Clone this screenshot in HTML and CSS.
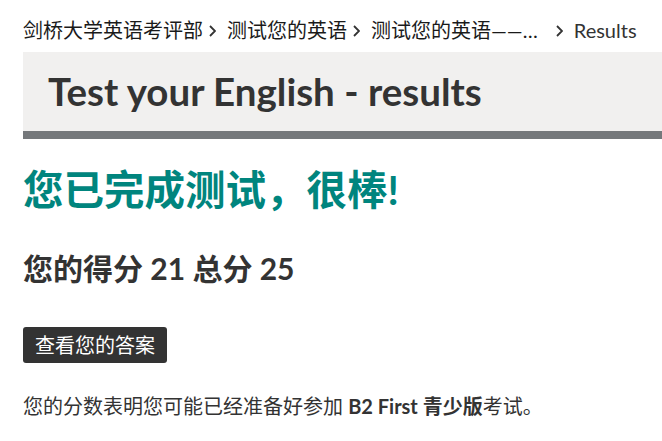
FILE: index.html
```html
<!DOCTYPE html>
<html lang="zh-CN">
<head>
<meta charset="utf-8">
<title>Test your English - results</title>
<link rel="stylesheet" href="styles.css">
</head>
<body>
<nav class="crumbs">
  <a class="crumb" href="#">剑桥大学英语考评部</a>
  <svg class="sep" viewBox="0 0 7 12" aria-hidden="true"><path d="M1 1l5 5-5 5"/></svg>
  <a class="crumb" href="#">测试您的英语</a>
  <svg class="sep" viewBox="0 0 7 12" aria-hidden="true"><path d="M1 1l5 5-5 5"/></svg>
  <a class="crumb crumb-cut" href="#">测试您的英语——…</a>
  <svg class="sep" viewBox="0 0 7 12" aria-hidden="true"><path d="M1 1l5 5-5 5"/></svg>
  <span class="crumb current">Results</span>
</nav>
<header class="banner">
  <h1 class="banner-title">Test your English - results</h1>
</header>
<main class="result">
  <h2 class="result-title">您已完成测试，很棒!</h2>
  <h3 class="result-score">您的得分 21 总分 25</h3>
  <button class="btn-answers" type="button">查看您的答案</button>
  <p class="result-note">您的分数表明您可能已经准备好参加 <strong>B2 First 青少版</strong>考试。</p>
</main>
</body>
</html>
```
FILE: styles.css
```css
html, body {
  margin: 0;
  padding: 0;
  background: #fff;
}

body {
  font-family: "Lato", "Noto Sans CJK SC", sans-serif;
  color: #333;
  padding-left: 23px;
}

.crumbs {
  display: flex;
  align-items: center;
  height: 44px;
  padding-top: 8px;
  font-size: 20px;
  line-height: 1;
  white-space: nowrap;
}

.crumb {
  color: #1a1a1a;
  text-decoration: none;
}

.sep {
  width: 7px;
  height: 12px;
  margin: 1px 11px 0 6px;
  fill: none;
  stroke: #333;
  stroke-width: 1.8;
}

.crumb-cut {
  margin-right: 12px;
}

.current {
  color: #333;
  font-size: 20px;
}

.banner {
  background: #f1f0ef;
  border-bottom: 8px solid #75787b;
  height: 79px;
  display: flex;
  align-items: center;
  padding-left: 25px;
}

.banner-title {
  margin: 0;
  font-size: 38.5px;
  font-weight: 700;
  color: #333;
  line-height: 1;
}

.result {
  padding-top: 25px;
}

.result-title {
  margin: 0;
  font-size: 40.5px;
  font-weight: 700;
  color: #00857e;
  line-height: 1.3;
}

.result-score {
  margin: 32px 0 0;
  font-size: 30px;
  font-weight: 700;
  color: #333;
  line-height: 1.3;
}

.btn-answers {
  display: inline-block;
  margin-top: 39px;
  height: 36px;
  padding: 0 12px;
  border: 0;
  border-radius: 3px;
  background: #333;
  color: #fff;
  font-family: inherit;
  font-size: 20px;
  line-height: 36px;
}

.result-note {
  margin: 30px 0 0;
  font-size: 20px;
  line-height: 1.3;
  color: #333;
}

.result-note strong {
  font-weight: 700;
}
```
